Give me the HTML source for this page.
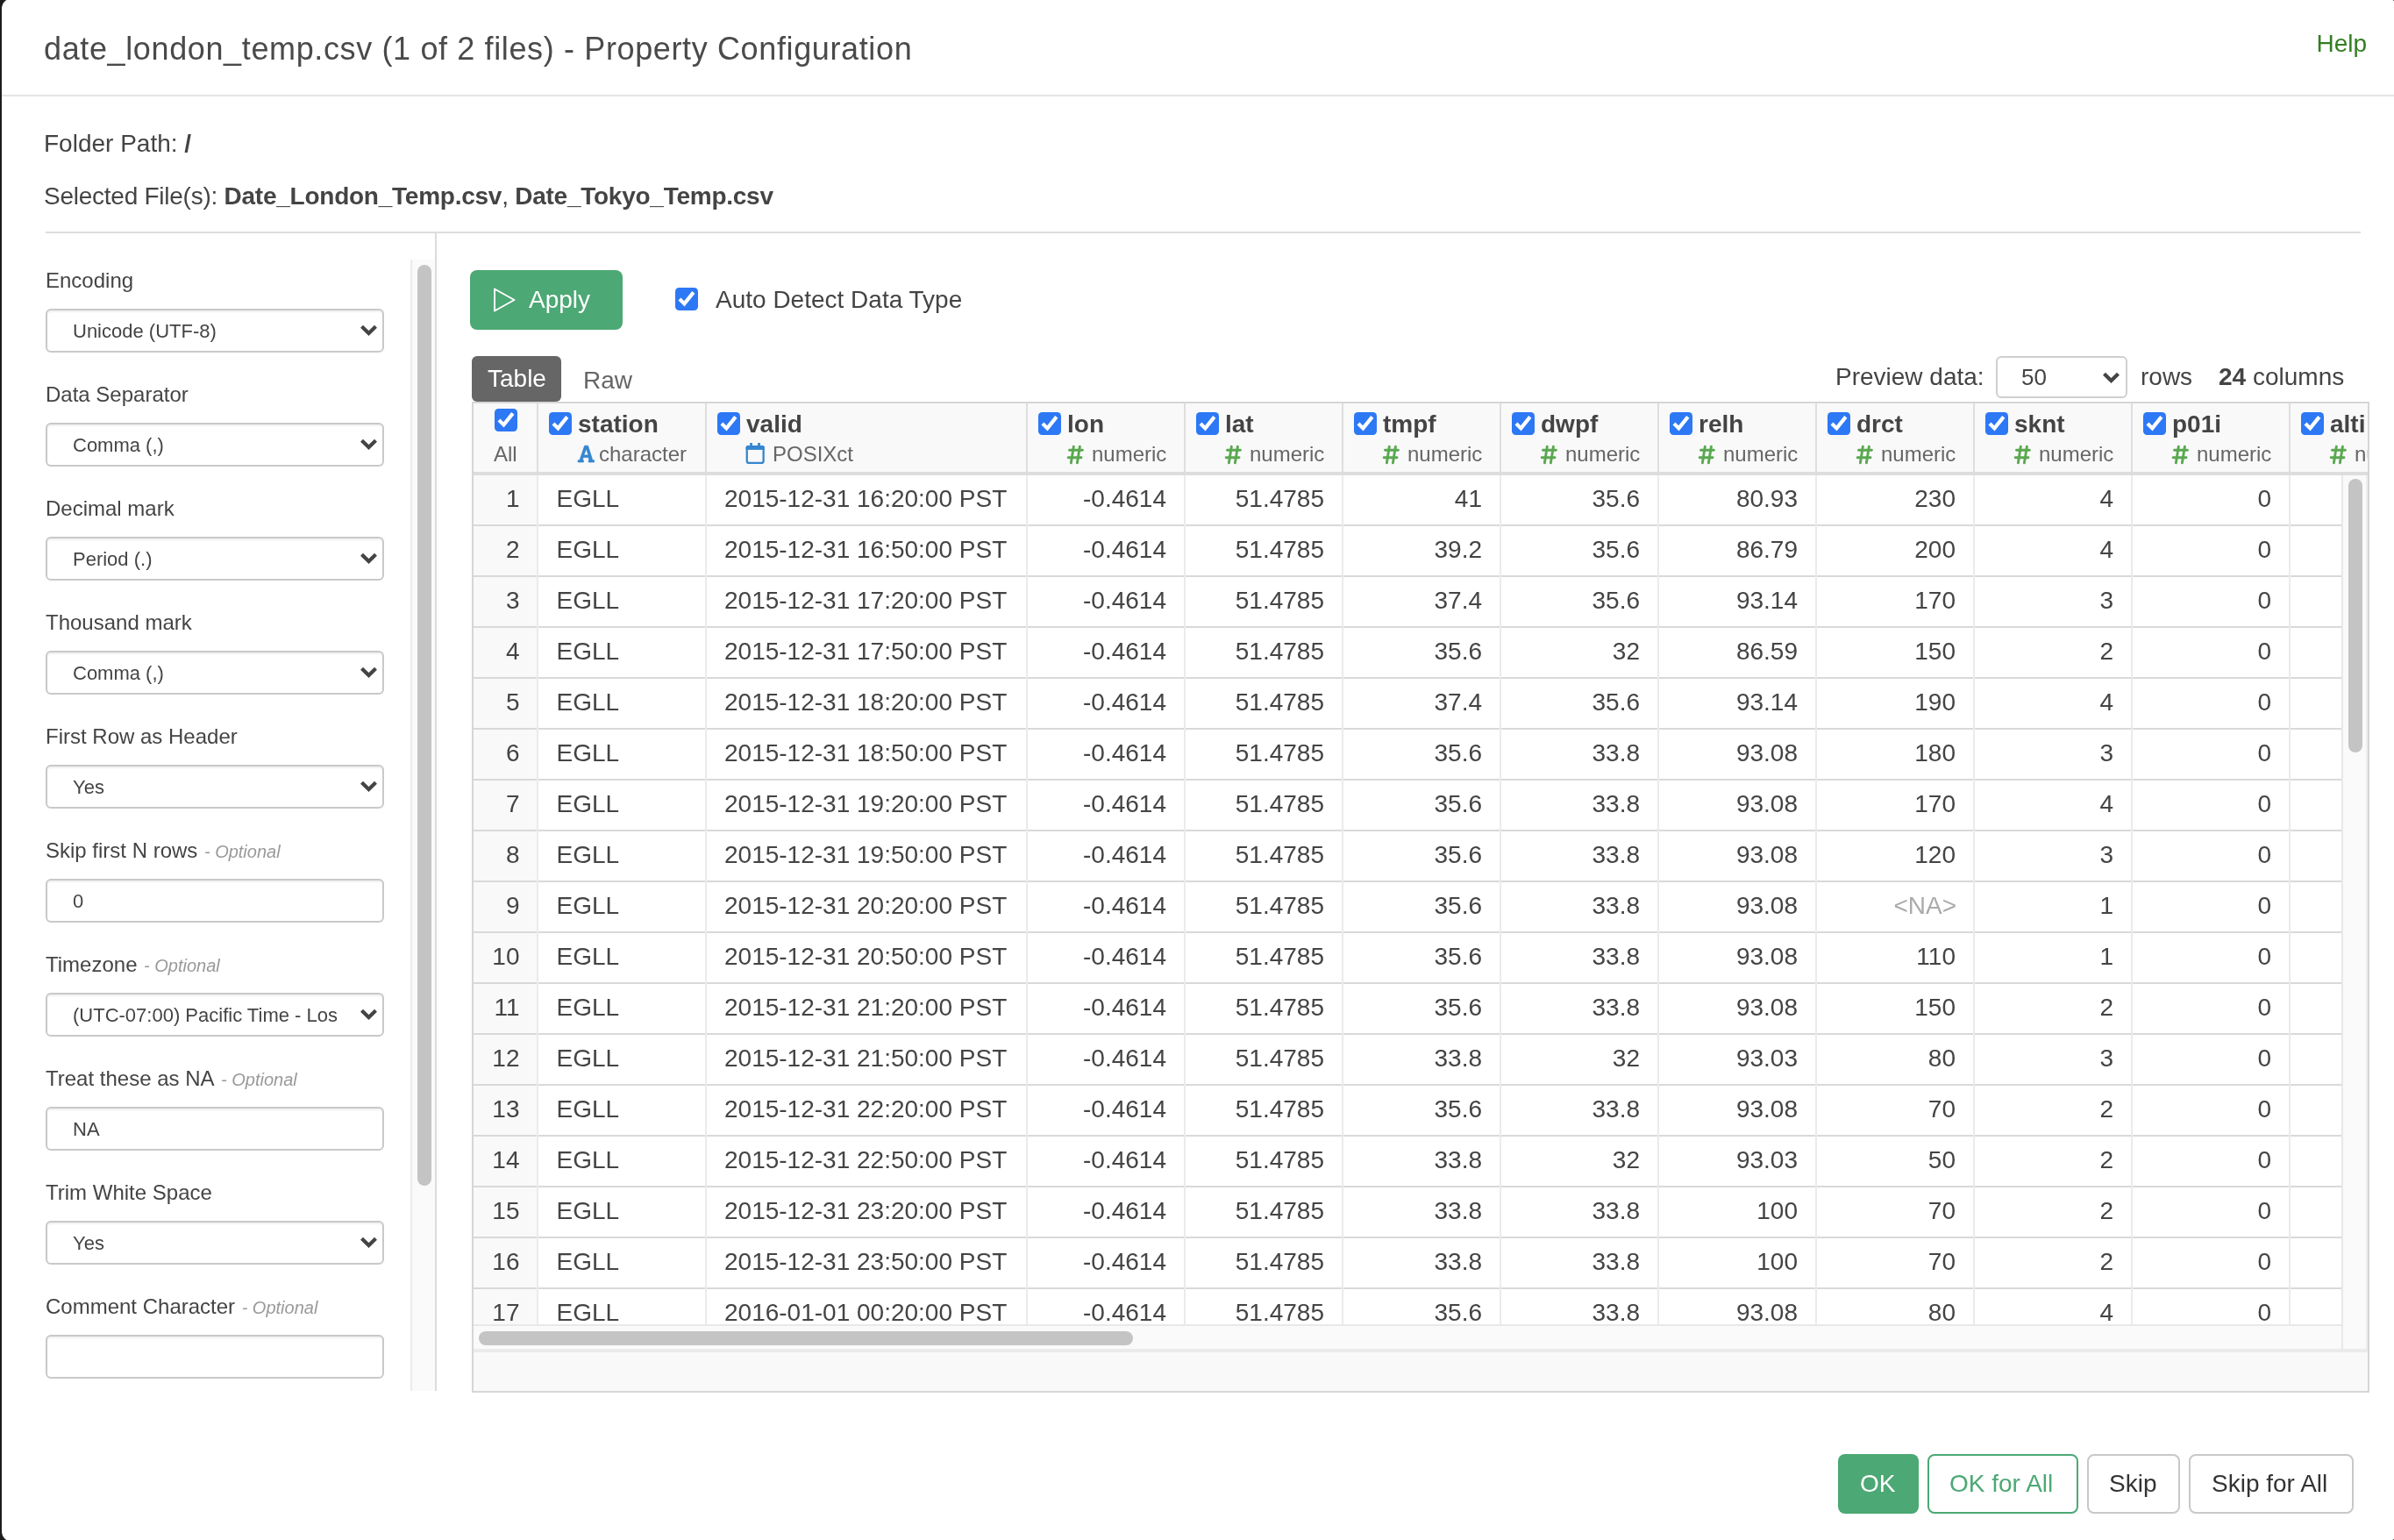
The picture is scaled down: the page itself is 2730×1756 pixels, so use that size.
<!DOCTYPE html>
<html><head><meta charset="utf-8"><title>Property Configuration</title>
<style>
html,body{margin:0;padding:0;width:2730px;height:1756px;overflow:hidden;background:#1c1e1e;}
.modal{position:absolute;left:2px;top:-2px;width:2732px;height:1760px;background:#fff;border-radius:12px;overflow:hidden;}
.stage{position:absolute;left:-2px;top:2px;width:2730px;height:1756px;will-change:transform;}
.t{position:absolute;white-space:pre;line-height:1;font-family:"Liberation Sans",sans-serif;}
.r{position:absolute;}
.r svg{display:block}
.clip{position:absolute;overflow:hidden;}
.box{position:absolute;left:52px;width:386px;height:50px;box-sizing:border-box;border:2px solid #c9c9c9;border-radius:6px;background:#fff;box-shadow:inset 0 2px 2px rgba(0,0,0,0.06);}
</style></head>
<body><div class="modal"><div class="stage">
<div class="t" style="left:50px;top:37.5px;font-size:36px;color:#4a4a4a;font-weight:400;letter-spacing:0.63px">date_london_temp.csv (1 of 2 files) - Property Configuration</div>
<div class="t" style="left:2641.5px;top:36.1px;font-size:28px;color:#347d22;font-weight:400;">Help</div>
<div class="r" style="left:2px;top:108px;width:2730px;height:2px;background:#e5e5e5;"></div>
<div class="t" style="left:50px;top:150.3px;font-size:28px;color:#444;font-weight:400;">Folder Path: <b>/</b></div>
<div class="t" style="left:50px;top:210.3px;font-size:28px;color:#444;font-weight:400;letter-spacing:-0.25px">Selected File(s): <b>Date_London_Temp.csv</b>, <b>Date_Tokyo_Temp.csv</b></div>
<div class="r" style="left:52px;top:264px;width:2640px;height:2px;background:#dcdcdc;"></div>
<div class="r" style="left:496px;top:266px;width:2px;height:1320px;background:#dcdcdc;"></div>
<div class="r" style="left:468px;top:296px;width:28px;height:1290px;background:#fafafa;border-left:2px solid #ebebeb;box-sizing:border-box"></div>
<div class="r" style="left:476px;top:302px;width:16px;height:1050px;background:#c4c4c4;border-radius:8px"></div>
<div class="t" style="left:52px;top:307.7px;font-size:24px;color:#444;font-weight:400;">Encoding</div>
<div class="box" style="top:352px"></div>
<div class="t" style="left:83px;top:367.4px;font-size:22px;color:#444;font-weight:400;">Unicode (UTF-8)</div>
<div class="r" style="left:409.5px;top:370px;width:22px;height:14px"><svg width="22" height="14" viewBox="0 0 22 14"><polyline points="2.5,2.2 10.5,10 18.5,2.2" fill="none" stroke="#444" stroke-width="4.2"/></svg></div>
<div class="t" style="left:52px;top:437.7px;font-size:24px;color:#444;font-weight:400;">Data Separator</div>
<div class="box" style="top:482px"></div>
<div class="t" style="left:83px;top:497.4px;font-size:22px;color:#444;font-weight:400;">Comma (,)</div>
<div class="r" style="left:409.5px;top:500px;width:22px;height:14px"><svg width="22" height="14" viewBox="0 0 22 14"><polyline points="2.5,2.2 10.5,10 18.5,2.2" fill="none" stroke="#444" stroke-width="4.2"/></svg></div>
<div class="t" style="left:52px;top:567.7px;font-size:24px;color:#444;font-weight:400;">Decimal mark</div>
<div class="box" style="top:612px"></div>
<div class="t" style="left:83px;top:627.4px;font-size:22px;color:#444;font-weight:400;">Period (.)</div>
<div class="r" style="left:409.5px;top:630px;width:22px;height:14px"><svg width="22" height="14" viewBox="0 0 22 14"><polyline points="2.5,2.2 10.5,10 18.5,2.2" fill="none" stroke="#444" stroke-width="4.2"/></svg></div>
<div class="t" style="left:52px;top:697.7px;font-size:24px;color:#444;font-weight:400;">Thousand mark</div>
<div class="box" style="top:742px"></div>
<div class="t" style="left:83px;top:757.4px;font-size:22px;color:#444;font-weight:400;">Comma (,)</div>
<div class="r" style="left:409.5px;top:760px;width:22px;height:14px"><svg width="22" height="14" viewBox="0 0 22 14"><polyline points="2.5,2.2 10.5,10 18.5,2.2" fill="none" stroke="#444" stroke-width="4.2"/></svg></div>
<div class="t" style="left:52px;top:827.7px;font-size:24px;color:#444;font-weight:400;">First Row as Header</div>
<div class="box" style="top:872px"></div>
<div class="t" style="left:83px;top:887.4px;font-size:22px;color:#444;font-weight:400;">Yes</div>
<div class="r" style="left:409.5px;top:890px;width:22px;height:14px"><svg width="22" height="14" viewBox="0 0 22 14"><polyline points="2.5,2.2 10.5,10 18.5,2.2" fill="none" stroke="#444" stroke-width="4.2"/></svg></div>
<div class="t" style="left:52px;top:957.7px;font-size:24px;color:#444;font-weight:400;">Skip first N rows<span style="color:#999;font-style:italic;font-size:20px;padding-left:2px"> - Optional</span></div>
<div class="box" style="top:1002px"></div>
<div class="t" style="left:83px;top:1017.4px;font-size:22px;color:#444;font-weight:400;">0</div>
<div class="t" style="left:52px;top:1087.7px;font-size:24px;color:#444;font-weight:400;">Timezone<span style="color:#999;font-style:italic;font-size:20px;padding-left:2px"> - Optional</span></div>
<div class="box" style="top:1132px"></div>
<div class="t" style="left:83px;top:1147.4px;font-size:22px;color:#444;font-weight:400;">(UTC-07:00) Pacific Time - Los</div>
<div class="r" style="left:409.5px;top:1150px;width:22px;height:14px"><svg width="22" height="14" viewBox="0 0 22 14"><polyline points="2.5,2.2 10.5,10 18.5,2.2" fill="none" stroke="#444" stroke-width="4.2"/></svg></div>
<div class="t" style="left:52px;top:1217.7px;font-size:24px;color:#444;font-weight:400;">Treat these as NA<span style="color:#999;font-style:italic;font-size:20px;padding-left:2px"> - Optional</span></div>
<div class="box" style="top:1262px"></div>
<div class="t" style="left:83px;top:1277.4px;font-size:22px;color:#444;font-weight:400;">NA</div>
<div class="t" style="left:52px;top:1347.7px;font-size:24px;color:#444;font-weight:400;">Trim White Space</div>
<div class="box" style="top:1392px"></div>
<div class="t" style="left:83px;top:1407.4px;font-size:22px;color:#444;font-weight:400;">Yes</div>
<div class="r" style="left:409.5px;top:1410px;width:22px;height:14px"><svg width="22" height="14" viewBox="0 0 22 14"><polyline points="2.5,2.2 10.5,10 18.5,2.2" fill="none" stroke="#444" stroke-width="4.2"/></svg></div>
<div class="t" style="left:52px;top:1477.7px;font-size:24px;color:#444;font-weight:400;">Comment Character<span style="color:#999;font-style:italic;font-size:20px;padding-left:2px"> - Optional</span></div>
<div class="box" style="top:1522px"></div>
<div class="r" style="left:536px;top:308px;width:174px;height:68px;background:#4ca874;border-radius:8px"></div>
<div class="r" style="left:560px;top:326px;width:30px;height:32px"><svg width="30" height="32" viewBox="0 0 30 32"><path d="M4,3.5 L26.5,16 L4,28.5 Z" fill="none" stroke="#fff" stroke-width="2" stroke-linejoin="round"/></svg></div>
<div class="t" style="left:603px;top:328.3px;font-size:28px;color:#fff;font-weight:400;">Apply</div>
<div class="r" style="left:770px;top:328px;width:26px;height:26px"><svg width="26" height="26" viewBox="0 0 26 26"><rect x="0" y="0" width="26" height="26" rx="4.5" fill="#2d78f5"/><polyline points="5,13 10.4,18.4 20.8,5.4" fill="none" stroke="#fff" stroke-width="4.2"/></svg></div>
<div class="t" style="left:816px;top:328.3px;font-size:28px;color:#444;font-weight:400;">Auto Detect Data Type</div>
<div class="r" style="left:538px;top:406px;width:102px;height:52px;background:#666;border-radius:6px"></div>
<div class="t" style="left:556px;top:418.3px;font-size:28px;color:#fff;font-weight:400;">Table</div>
<div class="t" style="left:665px;top:420.3px;font-size:28px;color:#666;font-weight:400;">Raw</div>
<div class="t" style="left:2093px;top:416.3px;font-size:28px;color:#444;font-weight:400;">Preview data:</div>
<div class="r" style="left:2276px;top:406px;width:150px;height:48px;background:#fff;border:2px solid #cfcfcf;border-radius:6px;box-sizing:border-box"></div>
<div class="t" style="left:2305px;top:417.0px;font-size:26px;color:#444;font-weight:400;">50</div>
<div class="r" style="left:2397px;top:424px;width:22px;height:14px"><svg width="22" height="14" viewBox="0 0 22 14"><polyline points="2.5,2.2 10.5,10 18.5,2.2" fill="none" stroke="#444" stroke-width="4.2"/></svg></div>
<div class="t" style="left:2441px;top:416.3px;font-size:28px;color:#444;font-weight:400;">rows</div>
<div class="t" style="left:2530px;top:416.3px;font-size:28px;color:#444;font-weight:400;"><b>24</b> columns</div>
<div class="r" style="left:538px;top:458px;width:2164px;height:1130px;background:#f9f9f9;border:2px solid #d6d6d6;box-sizing:border-box"></div>
<div class="r" style="left:540px;top:460px;width:2160px;height:78px;background:#f9f9f9;"></div>
<div class="r" style="left:540px;top:538px;width:2160px;height:4px;background:#dddddd;"></div>
<div class="r" style="left:614px;top:542px;width:2056px;height:968px;background:#ffffff;"></div>
<div class="r" style="left:540px;top:542px;width:72px;height:968px;background:#f9f9f9;"></div>
<div class="r" style="left:540px;top:598px;width:2130px;height:2px;background:#d9d9d9;"></div>
<div class="r" style="left:540px;top:656px;width:2130px;height:2px;background:#d9d9d9;"></div>
<div class="r" style="left:540px;top:714px;width:2130px;height:2px;background:#d9d9d9;"></div>
<div class="r" style="left:540px;top:772px;width:2130px;height:2px;background:#d9d9d9;"></div>
<div class="r" style="left:540px;top:830px;width:2130px;height:2px;background:#d9d9d9;"></div>
<div class="r" style="left:540px;top:888px;width:2130px;height:2px;background:#d9d9d9;"></div>
<div class="r" style="left:540px;top:946px;width:2130px;height:2px;background:#d9d9d9;"></div>
<div class="r" style="left:540px;top:1004px;width:2130px;height:2px;background:#d9d9d9;"></div>
<div class="r" style="left:540px;top:1062px;width:2130px;height:2px;background:#d9d9d9;"></div>
<div class="r" style="left:540px;top:1120px;width:2130px;height:2px;background:#d9d9d9;"></div>
<div class="r" style="left:540px;top:1178px;width:2130px;height:2px;background:#d9d9d9;"></div>
<div class="r" style="left:540px;top:1236px;width:2130px;height:2px;background:#d9d9d9;"></div>
<div class="r" style="left:540px;top:1294px;width:2130px;height:2px;background:#d9d9d9;"></div>
<div class="r" style="left:540px;top:1352px;width:2130px;height:2px;background:#d9d9d9;"></div>
<div class="r" style="left:540px;top:1410px;width:2130px;height:2px;background:#d9d9d9;"></div>
<div class="r" style="left:540px;top:1468px;width:2130px;height:2px;background:#d9d9d9;"></div>
<div class="r" style="left:612px;top:460px;width:2px;height:78px;background:#dedede;"></div>
<div class="r" style="left:612px;top:542px;width:2px;height:968px;background:#ebebeb;"></div>
<div class="r" style="left:804px;top:460px;width:2px;height:78px;background:#dedede;"></div>
<div class="r" style="left:804px;top:542px;width:2px;height:968px;background:#ebebeb;"></div>
<div class="r" style="left:1170px;top:460px;width:2px;height:78px;background:#dedede;"></div>
<div class="r" style="left:1170px;top:542px;width:2px;height:968px;background:#ebebeb;"></div>
<div class="r" style="left:1350px;top:460px;width:2px;height:78px;background:#dedede;"></div>
<div class="r" style="left:1350px;top:542px;width:2px;height:968px;background:#ebebeb;"></div>
<div class="r" style="left:1530px;top:460px;width:2px;height:78px;background:#dedede;"></div>
<div class="r" style="left:1530px;top:542px;width:2px;height:968px;background:#ebebeb;"></div>
<div class="r" style="left:1710px;top:460px;width:2px;height:78px;background:#dedede;"></div>
<div class="r" style="left:1710px;top:542px;width:2px;height:968px;background:#ebebeb;"></div>
<div class="r" style="left:1890px;top:460px;width:2px;height:78px;background:#dedede;"></div>
<div class="r" style="left:1890px;top:542px;width:2px;height:968px;background:#ebebeb;"></div>
<div class="r" style="left:2070px;top:460px;width:2px;height:78px;background:#dedede;"></div>
<div class="r" style="left:2070px;top:542px;width:2px;height:968px;background:#ebebeb;"></div>
<div class="r" style="left:2250px;top:460px;width:2px;height:78px;background:#dedede;"></div>
<div class="r" style="left:2250px;top:542px;width:2px;height:968px;background:#ebebeb;"></div>
<div class="r" style="left:2430px;top:460px;width:2px;height:78px;background:#dedede;"></div>
<div class="r" style="left:2430px;top:542px;width:2px;height:968px;background:#ebebeb;"></div>
<div class="r" style="left:2610px;top:460px;width:2px;height:78px;background:#dedede;"></div>
<div class="r" style="left:2610px;top:542px;width:2px;height:968px;background:#ebebeb;"></div>
<div class="r" style="left:564px;top:466px;width:26px;height:26px"><svg width="26" height="26" viewBox="0 0 26 26"><rect x="0" y="0" width="26" height="26" rx="4.5" fill="#2d78f5"/><polyline points="5,13 10.4,18.4 20.8,5.4" fill="none" stroke="#fff" stroke-width="4.2"/></svg></div>
<div class="t" style="left:563px;top:505.7px;font-size:24px;color:#666;font-weight:400;">All</div>
<div class="clip" style="left:540px;top:460px;width:2160px;height:78px"><div style="position:absolute;left:-540px;top:-460px"><div class="r" style="left:626px;top:470px;width:26px;height:26px"><svg width="26" height="26" viewBox="0 0 26 26"><rect x="0" y="0" width="26" height="26" rx="4.5" fill="#2d78f5"/><polyline points="5,13 10.4,18.4 20.8,5.4" fill="none" stroke="#fff" stroke-width="4.2"/></svg></div><div class="t" style="left:659px;top:470.3px;font-size:28px;color:#444;font-weight:700;">station</div><div class="r" style="left:650px;top:502px;width:40px;height:30px"><svg width="40" height="30" viewBox="0 0 40 30"><path d="M16.6,6.2 L20.5,6.2 L25.8,22.7 L27.6,22.7 L27.6,25 L21.2,25 L21.2,22.7 L22,22.7 L21,19.6 L15.2,19.6 L14.2,22.7 L15.4,22.7 L15.4,25 L9.1,25 L9.1,22.7 L11,22.7 Z M18.45,9.9 L21,16.9 L15.9,16.9 Z" fill="#3586cf" fill-rule="evenodd" stroke="#3586cf" stroke-width="0.7" stroke-linejoin="round"/></svg></div><div class="t" style="left:683px;top:505.7px;font-size:24px;color:#666;font-weight:400;">character</div><div class="r" style="left:818px;top:470px;width:26px;height:26px"><svg width="26" height="26" viewBox="0 0 26 26"><rect x="0" y="0" width="26" height="26" rx="4.5" fill="#2d78f5"/><polyline points="5,13 10.4,18.4 20.8,5.4" fill="none" stroke="#fff" stroke-width="4.2"/></svg></div><div class="t" style="left:851px;top:470.3px;font-size:28px;color:#444;font-weight:700;">valid</div><div class="r" style="left:850px;top:505px;width:23px;height:25px"><svg width="23" height="25" viewBox="0 0 23 25"><rect x="1.75" y="4.05" width="18.9" height="18.9" rx="2.5" fill="none" stroke="#3586cf" stroke-width="2.3"/><rect x="0.6" y="2.9" width="21.2" height="4.8" rx="2" fill="#3586cf"/><rect x="0.6" y="5" width="21.2" height="2.7" fill="#3586cf"/><rect x="5.2" y="0" width="2.7" height="4" fill="#3586cf"/><rect x="14.1" y="0" width="2.8" height="4" fill="#3586cf"/></svg></div><div class="t" style="left:881px;top:505.7px;font-size:24px;color:#666;font-weight:400;">POSIXct</div><div class="r" style="left:1184px;top:470px;width:26px;height:26px"><svg width="26" height="26" viewBox="0 0 26 26"><rect x="0" y="0" width="26" height="26" rx="4.5" fill="#2d78f5"/><polyline points="5,13 10.4,18.4 20.8,5.4" fill="none" stroke="#fff" stroke-width="4.2"/></svg></div><div class="t" style="left:1217px;top:470.3px;font-size:28px;color:#444;font-weight:700;">lon</div><div class="r" style="left:1210px;top:502px;width:40px;height:30px"><svg width="40" height="30" viewBox="0 0 40 30" stroke="#5aa850" stroke-width="2.9" stroke-linecap="round" fill="none"><line x1="14.3" y1="7.3" x2="11.4" y2="25.8"/><line x1="21.4" y1="7.3" x2="18.4" y2="25.8"/><line x1="9.6" y1="11.3" x2="24.3" y2="11.3"/><line x1="8.2" y1="19.7" x2="23" y2="19.7"/></svg></div><div class="t" style="left:1245px;top:505.7px;font-size:24px;color:#666;font-weight:400;">numeric</div><div class="r" style="left:1364px;top:470px;width:26px;height:26px"><svg width="26" height="26" viewBox="0 0 26 26"><rect x="0" y="0" width="26" height="26" rx="4.5" fill="#2d78f5"/><polyline points="5,13 10.4,18.4 20.8,5.4" fill="none" stroke="#fff" stroke-width="4.2"/></svg></div><div class="t" style="left:1397px;top:470.3px;font-size:28px;color:#444;font-weight:700;">lat</div><div class="r" style="left:1390px;top:502px;width:40px;height:30px"><svg width="40" height="30" viewBox="0 0 40 30" stroke="#5aa850" stroke-width="2.9" stroke-linecap="round" fill="none"><line x1="14.3" y1="7.3" x2="11.4" y2="25.8"/><line x1="21.4" y1="7.3" x2="18.4" y2="25.8"/><line x1="9.6" y1="11.3" x2="24.3" y2="11.3"/><line x1="8.2" y1="19.7" x2="23" y2="19.7"/></svg></div><div class="t" style="left:1425px;top:505.7px;font-size:24px;color:#666;font-weight:400;">numeric</div><div class="r" style="left:1544px;top:470px;width:26px;height:26px"><svg width="26" height="26" viewBox="0 0 26 26"><rect x="0" y="0" width="26" height="26" rx="4.5" fill="#2d78f5"/><polyline points="5,13 10.4,18.4 20.8,5.4" fill="none" stroke="#fff" stroke-width="4.2"/></svg></div><div class="t" style="left:1577px;top:470.3px;font-size:28px;color:#444;font-weight:700;">tmpf</div><div class="r" style="left:1570px;top:502px;width:40px;height:30px"><svg width="40" height="30" viewBox="0 0 40 30" stroke="#5aa850" stroke-width="2.9" stroke-linecap="round" fill="none"><line x1="14.3" y1="7.3" x2="11.4" y2="25.8"/><line x1="21.4" y1="7.3" x2="18.4" y2="25.8"/><line x1="9.6" y1="11.3" x2="24.3" y2="11.3"/><line x1="8.2" y1="19.7" x2="23" y2="19.7"/></svg></div><div class="t" style="left:1605px;top:505.7px;font-size:24px;color:#666;font-weight:400;">numeric</div><div class="r" style="left:1724px;top:470px;width:26px;height:26px"><svg width="26" height="26" viewBox="0 0 26 26"><rect x="0" y="0" width="26" height="26" rx="4.5" fill="#2d78f5"/><polyline points="5,13 10.4,18.4 20.8,5.4" fill="none" stroke="#fff" stroke-width="4.2"/></svg></div><div class="t" style="left:1757px;top:470.3px;font-size:28px;color:#444;font-weight:700;">dwpf</div><div class="r" style="left:1750px;top:502px;width:40px;height:30px"><svg width="40" height="30" viewBox="0 0 40 30" stroke="#5aa850" stroke-width="2.9" stroke-linecap="round" fill="none"><line x1="14.3" y1="7.3" x2="11.4" y2="25.8"/><line x1="21.4" y1="7.3" x2="18.4" y2="25.8"/><line x1="9.6" y1="11.3" x2="24.3" y2="11.3"/><line x1="8.2" y1="19.7" x2="23" y2="19.7"/></svg></div><div class="t" style="left:1785px;top:505.7px;font-size:24px;color:#666;font-weight:400;">numeric</div><div class="r" style="left:1904px;top:470px;width:26px;height:26px"><svg width="26" height="26" viewBox="0 0 26 26"><rect x="0" y="0" width="26" height="26" rx="4.5" fill="#2d78f5"/><polyline points="5,13 10.4,18.4 20.8,5.4" fill="none" stroke="#fff" stroke-width="4.2"/></svg></div><div class="t" style="left:1937px;top:470.3px;font-size:28px;color:#444;font-weight:700;">relh</div><div class="r" style="left:1930px;top:502px;width:40px;height:30px"><svg width="40" height="30" viewBox="0 0 40 30" stroke="#5aa850" stroke-width="2.9" stroke-linecap="round" fill="none"><line x1="14.3" y1="7.3" x2="11.4" y2="25.8"/><line x1="21.4" y1="7.3" x2="18.4" y2="25.8"/><line x1="9.6" y1="11.3" x2="24.3" y2="11.3"/><line x1="8.2" y1="19.7" x2="23" y2="19.7"/></svg></div><div class="t" style="left:1965px;top:505.7px;font-size:24px;color:#666;font-weight:400;">numeric</div><div class="r" style="left:2084px;top:470px;width:26px;height:26px"><svg width="26" height="26" viewBox="0 0 26 26"><rect x="0" y="0" width="26" height="26" rx="4.5" fill="#2d78f5"/><polyline points="5,13 10.4,18.4 20.8,5.4" fill="none" stroke="#fff" stroke-width="4.2"/></svg></div><div class="t" style="left:2117px;top:470.3px;font-size:28px;color:#444;font-weight:700;">drct</div><div class="r" style="left:2110px;top:502px;width:40px;height:30px"><svg width="40" height="30" viewBox="0 0 40 30" stroke="#5aa850" stroke-width="2.9" stroke-linecap="round" fill="none"><line x1="14.3" y1="7.3" x2="11.4" y2="25.8"/><line x1="21.4" y1="7.3" x2="18.4" y2="25.8"/><line x1="9.6" y1="11.3" x2="24.3" y2="11.3"/><line x1="8.2" y1="19.7" x2="23" y2="19.7"/></svg></div><div class="t" style="left:2145px;top:505.7px;font-size:24px;color:#666;font-weight:400;">numeric</div><div class="r" style="left:2264px;top:470px;width:26px;height:26px"><svg width="26" height="26" viewBox="0 0 26 26"><rect x="0" y="0" width="26" height="26" rx="4.5" fill="#2d78f5"/><polyline points="5,13 10.4,18.4 20.8,5.4" fill="none" stroke="#fff" stroke-width="4.2"/></svg></div><div class="t" style="left:2297px;top:470.3px;font-size:28px;color:#444;font-weight:700;">sknt</div><div class="r" style="left:2290px;top:502px;width:40px;height:30px"><svg width="40" height="30" viewBox="0 0 40 30" stroke="#5aa850" stroke-width="2.9" stroke-linecap="round" fill="none"><line x1="14.3" y1="7.3" x2="11.4" y2="25.8"/><line x1="21.4" y1="7.3" x2="18.4" y2="25.8"/><line x1="9.6" y1="11.3" x2="24.3" y2="11.3"/><line x1="8.2" y1="19.7" x2="23" y2="19.7"/></svg></div><div class="t" style="left:2325px;top:505.7px;font-size:24px;color:#666;font-weight:400;">numeric</div><div class="r" style="left:2444px;top:470px;width:26px;height:26px"><svg width="26" height="26" viewBox="0 0 26 26"><rect x="0" y="0" width="26" height="26" rx="4.5" fill="#2d78f5"/><polyline points="5,13 10.4,18.4 20.8,5.4" fill="none" stroke="#fff" stroke-width="4.2"/></svg></div><div class="t" style="left:2477px;top:470.3px;font-size:28px;color:#444;font-weight:700;">p01i</div><div class="r" style="left:2470px;top:502px;width:40px;height:30px"><svg width="40" height="30" viewBox="0 0 40 30" stroke="#5aa850" stroke-width="2.9" stroke-linecap="round" fill="none"><line x1="14.3" y1="7.3" x2="11.4" y2="25.8"/><line x1="21.4" y1="7.3" x2="18.4" y2="25.8"/><line x1="9.6" y1="11.3" x2="24.3" y2="11.3"/><line x1="8.2" y1="19.7" x2="23" y2="19.7"/></svg></div><div class="t" style="left:2505px;top:505.7px;font-size:24px;color:#666;font-weight:400;">numeric</div><div class="r" style="left:2624px;top:470px;width:26px;height:26px"><svg width="26" height="26" viewBox="0 0 26 26"><rect x="0" y="0" width="26" height="26" rx="4.5" fill="#2d78f5"/><polyline points="5,13 10.4,18.4 20.8,5.4" fill="none" stroke="#fff" stroke-width="4.2"/></svg></div><div class="t" style="left:2657px;top:470.3px;font-size:28px;color:#444;font-weight:700;">alti</div><div class="r" style="left:2650px;top:502px;width:40px;height:30px"><svg width="40" height="30" viewBox="0 0 40 30" stroke="#5aa850" stroke-width="2.9" stroke-linecap="round" fill="none"><line x1="14.3" y1="7.3" x2="11.4" y2="25.8"/><line x1="21.4" y1="7.3" x2="18.4" y2="25.8"/><line x1="9.6" y1="11.3" x2="24.3" y2="11.3"/><line x1="8.2" y1="19.7" x2="23" y2="19.7"/></svg></div><div class="t" style="left:2685px;top:505.7px;font-size:24px;color:#666;font-weight:400;">numeric</div></div></div>
<div class="clip" style="left:540px;top:542px;width:2130px;height:968px"><div style="position:absolute;left:-540px;top:-542px;width:2730px;height:1756px"><div class="t" style="right:2137.5px;top:555.0px;font-size:28px;color:#444;font-weight:400;text-align:right;">1</div><div class="t" style="left:634.5px;top:555.0px;font-size:28px;color:#444;font-weight:400;">EGLL</div><div class="t" style="left:826px;top:555.0px;font-size:28px;color:#444;font-weight:400;">2015-12-31 16:20:00 PST</div><div class="t" style="right:1400px;top:555.0px;font-size:28px;color:#444;font-weight:400;text-align:right;">-0.4614</div><div class="t" style="right:1220px;top:555.0px;font-size:28px;color:#444;font-weight:400;text-align:right;">51.4785</div><div class="t" style="right:1040px;top:555.0px;font-size:28px;color:#444;font-weight:400;text-align:right;">41</div><div class="t" style="right:860px;top:555.0px;font-size:28px;color:#444;font-weight:400;text-align:right;">35.6</div><div class="t" style="right:680px;top:555.0px;font-size:28px;color:#444;font-weight:400;text-align:right;">80.93</div><div class="t" style="right:500px;top:555.0px;font-size:28px;color:#444;font-weight:400;text-align:right;">230</div><div class="t" style="right:320px;top:555.0px;font-size:28px;color:#444;font-weight:400;text-align:right;">4</div><div class="t" style="right:140px;top:555.0px;font-size:28px;color:#444;font-weight:400;text-align:right;">0</div><div class="t" style="right:2137.5px;top:613.0px;font-size:28px;color:#444;font-weight:400;text-align:right;">2</div><div class="t" style="left:634.5px;top:613.0px;font-size:28px;color:#444;font-weight:400;">EGLL</div><div class="t" style="left:826px;top:613.0px;font-size:28px;color:#444;font-weight:400;">2015-12-31 16:50:00 PST</div><div class="t" style="right:1400px;top:613.0px;font-size:28px;color:#444;font-weight:400;text-align:right;">-0.4614</div><div class="t" style="right:1220px;top:613.0px;font-size:28px;color:#444;font-weight:400;text-align:right;">51.4785</div><div class="t" style="right:1040px;top:613.0px;font-size:28px;color:#444;font-weight:400;text-align:right;">39.2</div><div class="t" style="right:860px;top:613.0px;font-size:28px;color:#444;font-weight:400;text-align:right;">35.6</div><div class="t" style="right:680px;top:613.0px;font-size:28px;color:#444;font-weight:400;text-align:right;">86.79</div><div class="t" style="right:500px;top:613.0px;font-size:28px;color:#444;font-weight:400;text-align:right;">200</div><div class="t" style="right:320px;top:613.0px;font-size:28px;color:#444;font-weight:400;text-align:right;">4</div><div class="t" style="right:140px;top:613.0px;font-size:28px;color:#444;font-weight:400;text-align:right;">0</div><div class="t" style="right:2137.5px;top:671.0px;font-size:28px;color:#444;font-weight:400;text-align:right;">3</div><div class="t" style="left:634.5px;top:671.0px;font-size:28px;color:#444;font-weight:400;">EGLL</div><div class="t" style="left:826px;top:671.0px;font-size:28px;color:#444;font-weight:400;">2015-12-31 17:20:00 PST</div><div class="t" style="right:1400px;top:671.0px;font-size:28px;color:#444;font-weight:400;text-align:right;">-0.4614</div><div class="t" style="right:1220px;top:671.0px;font-size:28px;color:#444;font-weight:400;text-align:right;">51.4785</div><div class="t" style="right:1040px;top:671.0px;font-size:28px;color:#444;font-weight:400;text-align:right;">37.4</div><div class="t" style="right:860px;top:671.0px;font-size:28px;color:#444;font-weight:400;text-align:right;">35.6</div><div class="t" style="right:680px;top:671.0px;font-size:28px;color:#444;font-weight:400;text-align:right;">93.14</div><div class="t" style="right:500px;top:671.0px;font-size:28px;color:#444;font-weight:400;text-align:right;">170</div><div class="t" style="right:320px;top:671.0px;font-size:28px;color:#444;font-weight:400;text-align:right;">3</div><div class="t" style="right:140px;top:671.0px;font-size:28px;color:#444;font-weight:400;text-align:right;">0</div><div class="t" style="right:2137.5px;top:729.0px;font-size:28px;color:#444;font-weight:400;text-align:right;">4</div><div class="t" style="left:634.5px;top:729.0px;font-size:28px;color:#444;font-weight:400;">EGLL</div><div class="t" style="left:826px;top:729.0px;font-size:28px;color:#444;font-weight:400;">2015-12-31 17:50:00 PST</div><div class="t" style="right:1400px;top:729.0px;font-size:28px;color:#444;font-weight:400;text-align:right;">-0.4614</div><div class="t" style="right:1220px;top:729.0px;font-size:28px;color:#444;font-weight:400;text-align:right;">51.4785</div><div class="t" style="right:1040px;top:729.0px;font-size:28px;color:#444;font-weight:400;text-align:right;">35.6</div><div class="t" style="right:860px;top:729.0px;font-size:28px;color:#444;font-weight:400;text-align:right;">32</div><div class="t" style="right:680px;top:729.0px;font-size:28px;color:#444;font-weight:400;text-align:right;">86.59</div><div class="t" style="right:500px;top:729.0px;font-size:28px;color:#444;font-weight:400;text-align:right;">150</div><div class="t" style="right:320px;top:729.0px;font-size:28px;color:#444;font-weight:400;text-align:right;">2</div><div class="t" style="right:140px;top:729.0px;font-size:28px;color:#444;font-weight:400;text-align:right;">0</div><div class="t" style="right:2137.5px;top:787.0px;font-size:28px;color:#444;font-weight:400;text-align:right;">5</div><div class="t" style="left:634.5px;top:787.0px;font-size:28px;color:#444;font-weight:400;">EGLL</div><div class="t" style="left:826px;top:787.0px;font-size:28px;color:#444;font-weight:400;">2015-12-31 18:20:00 PST</div><div class="t" style="right:1400px;top:787.0px;font-size:28px;color:#444;font-weight:400;text-align:right;">-0.4614</div><div class="t" style="right:1220px;top:787.0px;font-size:28px;color:#444;font-weight:400;text-align:right;">51.4785</div><div class="t" style="right:1040px;top:787.0px;font-size:28px;color:#444;font-weight:400;text-align:right;">37.4</div><div class="t" style="right:860px;top:787.0px;font-size:28px;color:#444;font-weight:400;text-align:right;">35.6</div><div class="t" style="right:680px;top:787.0px;font-size:28px;color:#444;font-weight:400;text-align:right;">93.14</div><div class="t" style="right:500px;top:787.0px;font-size:28px;color:#444;font-weight:400;text-align:right;">190</div><div class="t" style="right:320px;top:787.0px;font-size:28px;color:#444;font-weight:400;text-align:right;">4</div><div class="t" style="right:140px;top:787.0px;font-size:28px;color:#444;font-weight:400;text-align:right;">0</div><div class="t" style="right:2137.5px;top:845.0px;font-size:28px;color:#444;font-weight:400;text-align:right;">6</div><div class="t" style="left:634.5px;top:845.0px;font-size:28px;color:#444;font-weight:400;">EGLL</div><div class="t" style="left:826px;top:845.0px;font-size:28px;color:#444;font-weight:400;">2015-12-31 18:50:00 PST</div><div class="t" style="right:1400px;top:845.0px;font-size:28px;color:#444;font-weight:400;text-align:right;">-0.4614</div><div class="t" style="right:1220px;top:845.0px;font-size:28px;color:#444;font-weight:400;text-align:right;">51.4785</div><div class="t" style="right:1040px;top:845.0px;font-size:28px;color:#444;font-weight:400;text-align:right;">35.6</div><div class="t" style="right:860px;top:845.0px;font-size:28px;color:#444;font-weight:400;text-align:right;">33.8</div><div class="t" style="right:680px;top:845.0px;font-size:28px;color:#444;font-weight:400;text-align:right;">93.08</div><div class="t" style="right:500px;top:845.0px;font-size:28px;color:#444;font-weight:400;text-align:right;">180</div><div class="t" style="right:320px;top:845.0px;font-size:28px;color:#444;font-weight:400;text-align:right;">3</div><div class="t" style="right:140px;top:845.0px;font-size:28px;color:#444;font-weight:400;text-align:right;">0</div><div class="t" style="right:2137.5px;top:903.0px;font-size:28px;color:#444;font-weight:400;text-align:right;">7</div><div class="t" style="left:634.5px;top:903.0px;font-size:28px;color:#444;font-weight:400;">EGLL</div><div class="t" style="left:826px;top:903.0px;font-size:28px;color:#444;font-weight:400;">2015-12-31 19:20:00 PST</div><div class="t" style="right:1400px;top:903.0px;font-size:28px;color:#444;font-weight:400;text-align:right;">-0.4614</div><div class="t" style="right:1220px;top:903.0px;font-size:28px;color:#444;font-weight:400;text-align:right;">51.4785</div><div class="t" style="right:1040px;top:903.0px;font-size:28px;color:#444;font-weight:400;text-align:right;">35.6</div><div class="t" style="right:860px;top:903.0px;font-size:28px;color:#444;font-weight:400;text-align:right;">33.8</div><div class="t" style="right:680px;top:903.0px;font-size:28px;color:#444;font-weight:400;text-align:right;">93.08</div><div class="t" style="right:500px;top:903.0px;font-size:28px;color:#444;font-weight:400;text-align:right;">170</div><div class="t" style="right:320px;top:903.0px;font-size:28px;color:#444;font-weight:400;text-align:right;">4</div><div class="t" style="right:140px;top:903.0px;font-size:28px;color:#444;font-weight:400;text-align:right;">0</div><div class="t" style="right:2137.5px;top:961.0px;font-size:28px;color:#444;font-weight:400;text-align:right;">8</div><div class="t" style="left:634.5px;top:961.0px;font-size:28px;color:#444;font-weight:400;">EGLL</div><div class="t" style="left:826px;top:961.0px;font-size:28px;color:#444;font-weight:400;">2015-12-31 19:50:00 PST</div><div class="t" style="right:1400px;top:961.0px;font-size:28px;color:#444;font-weight:400;text-align:right;">-0.4614</div><div class="t" style="right:1220px;top:961.0px;font-size:28px;color:#444;font-weight:400;text-align:right;">51.4785</div><div class="t" style="right:1040px;top:961.0px;font-size:28px;color:#444;font-weight:400;text-align:right;">35.6</div><div class="t" style="right:860px;top:961.0px;font-size:28px;color:#444;font-weight:400;text-align:right;">33.8</div><div class="t" style="right:680px;top:961.0px;font-size:28px;color:#444;font-weight:400;text-align:right;">93.08</div><div class="t" style="right:500px;top:961.0px;font-size:28px;color:#444;font-weight:400;text-align:right;">120</div><div class="t" style="right:320px;top:961.0px;font-size:28px;color:#444;font-weight:400;text-align:right;">3</div><div class="t" style="right:140px;top:961.0px;font-size:28px;color:#444;font-weight:400;text-align:right;">0</div><div class="t" style="right:2137.5px;top:1019.0px;font-size:28px;color:#444;font-weight:400;text-align:right;">9</div><div class="t" style="left:634.5px;top:1019.0px;font-size:28px;color:#444;font-weight:400;">EGLL</div><div class="t" style="left:826px;top:1019.0px;font-size:28px;color:#444;font-weight:400;">2015-12-31 20:20:00 PST</div><div class="t" style="right:1400px;top:1019.0px;font-size:28px;color:#444;font-weight:400;text-align:right;">-0.4614</div><div class="t" style="right:1220px;top:1019.0px;font-size:28px;color:#444;font-weight:400;text-align:right;">51.4785</div><div class="t" style="right:1040px;top:1019.0px;font-size:28px;color:#444;font-weight:400;text-align:right;">35.6</div><div class="t" style="right:860px;top:1019.0px;font-size:28px;color:#444;font-weight:400;text-align:right;">33.8</div><div class="t" style="right:680px;top:1019.0px;font-size:28px;color:#444;font-weight:400;text-align:right;">93.08</div><div class="t" style="right:499px;top:1019.0px;font-size:28px;color:#aaa;font-weight:400;text-align:right;">&lt;NA&gt;</div><div class="t" style="right:320px;top:1019.0px;font-size:28px;color:#444;font-weight:400;text-align:right;">1</div><div class="t" style="right:140px;top:1019.0px;font-size:28px;color:#444;font-weight:400;text-align:right;">0</div><div class="t" style="right:2137.5px;top:1077.0px;font-size:28px;color:#444;font-weight:400;text-align:right;">10</div><div class="t" style="left:634.5px;top:1077.0px;font-size:28px;color:#444;font-weight:400;">EGLL</div><div class="t" style="left:826px;top:1077.0px;font-size:28px;color:#444;font-weight:400;">2015-12-31 20:50:00 PST</div><div class="t" style="right:1400px;top:1077.0px;font-size:28px;color:#444;font-weight:400;text-align:right;">-0.4614</div><div class="t" style="right:1220px;top:1077.0px;font-size:28px;color:#444;font-weight:400;text-align:right;">51.4785</div><div class="t" style="right:1040px;top:1077.0px;font-size:28px;color:#444;font-weight:400;text-align:right;">35.6</div><div class="t" style="right:860px;top:1077.0px;font-size:28px;color:#444;font-weight:400;text-align:right;">33.8</div><div class="t" style="right:680px;top:1077.0px;font-size:28px;color:#444;font-weight:400;text-align:right;">93.08</div><div class="t" style="right:500px;top:1077.0px;font-size:28px;color:#444;font-weight:400;text-align:right;">110</div><div class="t" style="right:320px;top:1077.0px;font-size:28px;color:#444;font-weight:400;text-align:right;">1</div><div class="t" style="right:140px;top:1077.0px;font-size:28px;color:#444;font-weight:400;text-align:right;">0</div><div class="t" style="right:2137.5px;top:1135.0px;font-size:28px;color:#444;font-weight:400;text-align:right;">11</div><div class="t" style="left:634.5px;top:1135.0px;font-size:28px;color:#444;font-weight:400;">EGLL</div><div class="t" style="left:826px;top:1135.0px;font-size:28px;color:#444;font-weight:400;">2015-12-31 21:20:00 PST</div><div class="t" style="right:1400px;top:1135.0px;font-size:28px;color:#444;font-weight:400;text-align:right;">-0.4614</div><div class="t" style="right:1220px;top:1135.0px;font-size:28px;color:#444;font-weight:400;text-align:right;">51.4785</div><div class="t" style="right:1040px;top:1135.0px;font-size:28px;color:#444;font-weight:400;text-align:right;">35.6</div><div class="t" style="right:860px;top:1135.0px;font-size:28px;color:#444;font-weight:400;text-align:right;">33.8</div><div class="t" style="right:680px;top:1135.0px;font-size:28px;color:#444;font-weight:400;text-align:right;">93.08</div><div class="t" style="right:500px;top:1135.0px;font-size:28px;color:#444;font-weight:400;text-align:right;">150</div><div class="t" style="right:320px;top:1135.0px;font-size:28px;color:#444;font-weight:400;text-align:right;">2</div><div class="t" style="right:140px;top:1135.0px;font-size:28px;color:#444;font-weight:400;text-align:right;">0</div><div class="t" style="right:2137.5px;top:1193.0px;font-size:28px;color:#444;font-weight:400;text-align:right;">12</div><div class="t" style="left:634.5px;top:1193.0px;font-size:28px;color:#444;font-weight:400;">EGLL</div><div class="t" style="left:826px;top:1193.0px;font-size:28px;color:#444;font-weight:400;">2015-12-31 21:50:00 PST</div><div class="t" style="right:1400px;top:1193.0px;font-size:28px;color:#444;font-weight:400;text-align:right;">-0.4614</div><div class="t" style="right:1220px;top:1193.0px;font-size:28px;color:#444;font-weight:400;text-align:right;">51.4785</div><div class="t" style="right:1040px;top:1193.0px;font-size:28px;color:#444;font-weight:400;text-align:right;">33.8</div><div class="t" style="right:860px;top:1193.0px;font-size:28px;color:#444;font-weight:400;text-align:right;">32</div><div class="t" style="right:680px;top:1193.0px;font-size:28px;color:#444;font-weight:400;text-align:right;">93.03</div><div class="t" style="right:500px;top:1193.0px;font-size:28px;color:#444;font-weight:400;text-align:right;">80</div><div class="t" style="right:320px;top:1193.0px;font-size:28px;color:#444;font-weight:400;text-align:right;">3</div><div class="t" style="right:140px;top:1193.0px;font-size:28px;color:#444;font-weight:400;text-align:right;">0</div><div class="t" style="right:2137.5px;top:1251.0px;font-size:28px;color:#444;font-weight:400;text-align:right;">13</div><div class="t" style="left:634.5px;top:1251.0px;font-size:28px;color:#444;font-weight:400;">EGLL</div><div class="t" style="left:826px;top:1251.0px;font-size:28px;color:#444;font-weight:400;">2015-12-31 22:20:00 PST</div><div class="t" style="right:1400px;top:1251.0px;font-size:28px;color:#444;font-weight:400;text-align:right;">-0.4614</div><div class="t" style="right:1220px;top:1251.0px;font-size:28px;color:#444;font-weight:400;text-align:right;">51.4785</div><div class="t" style="right:1040px;top:1251.0px;font-size:28px;color:#444;font-weight:400;text-align:right;">35.6</div><div class="t" style="right:860px;top:1251.0px;font-size:28px;color:#444;font-weight:400;text-align:right;">33.8</div><div class="t" style="right:680px;top:1251.0px;font-size:28px;color:#444;font-weight:400;text-align:right;">93.08</div><div class="t" style="right:500px;top:1251.0px;font-size:28px;color:#444;font-weight:400;text-align:right;">70</div><div class="t" style="right:320px;top:1251.0px;font-size:28px;color:#444;font-weight:400;text-align:right;">2</div><div class="t" style="right:140px;top:1251.0px;font-size:28px;color:#444;font-weight:400;text-align:right;">0</div><div class="t" style="right:2137.5px;top:1309.0px;font-size:28px;color:#444;font-weight:400;text-align:right;">14</div><div class="t" style="left:634.5px;top:1309.0px;font-size:28px;color:#444;font-weight:400;">EGLL</div><div class="t" style="left:826px;top:1309.0px;font-size:28px;color:#444;font-weight:400;">2015-12-31 22:50:00 PST</div><div class="t" style="right:1400px;top:1309.0px;font-size:28px;color:#444;font-weight:400;text-align:right;">-0.4614</div><div class="t" style="right:1220px;top:1309.0px;font-size:28px;color:#444;font-weight:400;text-align:right;">51.4785</div><div class="t" style="right:1040px;top:1309.0px;font-size:28px;color:#444;font-weight:400;text-align:right;">33.8</div><div class="t" style="right:860px;top:1309.0px;font-size:28px;color:#444;font-weight:400;text-align:right;">32</div><div class="t" style="right:680px;top:1309.0px;font-size:28px;color:#444;font-weight:400;text-align:right;">93.03</div><div class="t" style="right:500px;top:1309.0px;font-size:28px;color:#444;font-weight:400;text-align:right;">50</div><div class="t" style="right:320px;top:1309.0px;font-size:28px;color:#444;font-weight:400;text-align:right;">2</div><div class="t" style="right:140px;top:1309.0px;font-size:28px;color:#444;font-weight:400;text-align:right;">0</div><div class="t" style="right:2137.5px;top:1367.0px;font-size:28px;color:#444;font-weight:400;text-align:right;">15</div><div class="t" style="left:634.5px;top:1367.0px;font-size:28px;color:#444;font-weight:400;">EGLL</div><div class="t" style="left:826px;top:1367.0px;font-size:28px;color:#444;font-weight:400;">2015-12-31 23:20:00 PST</div><div class="t" style="right:1400px;top:1367.0px;font-size:28px;color:#444;font-weight:400;text-align:right;">-0.4614</div><div class="t" style="right:1220px;top:1367.0px;font-size:28px;color:#444;font-weight:400;text-align:right;">51.4785</div><div class="t" style="right:1040px;top:1367.0px;font-size:28px;color:#444;font-weight:400;text-align:right;">33.8</div><div class="t" style="right:860px;top:1367.0px;font-size:28px;color:#444;font-weight:400;text-align:right;">33.8</div><div class="t" style="right:680px;top:1367.0px;font-size:28px;color:#444;font-weight:400;text-align:right;">100</div><div class="t" style="right:500px;top:1367.0px;font-size:28px;color:#444;font-weight:400;text-align:right;">70</div><div class="t" style="right:320px;top:1367.0px;font-size:28px;color:#444;font-weight:400;text-align:right;">2</div><div class="t" style="right:140px;top:1367.0px;font-size:28px;color:#444;font-weight:400;text-align:right;">0</div><div class="t" style="right:2137.5px;top:1425.0px;font-size:28px;color:#444;font-weight:400;text-align:right;">16</div><div class="t" style="left:634.5px;top:1425.0px;font-size:28px;color:#444;font-weight:400;">EGLL</div><div class="t" style="left:826px;top:1425.0px;font-size:28px;color:#444;font-weight:400;">2015-12-31 23:50:00 PST</div><div class="t" style="right:1400px;top:1425.0px;font-size:28px;color:#444;font-weight:400;text-align:right;">-0.4614</div><div class="t" style="right:1220px;top:1425.0px;font-size:28px;color:#444;font-weight:400;text-align:right;">51.4785</div><div class="t" style="right:1040px;top:1425.0px;font-size:28px;color:#444;font-weight:400;text-align:right;">33.8</div><div class="t" style="right:860px;top:1425.0px;font-size:28px;color:#444;font-weight:400;text-align:right;">33.8</div><div class="t" style="right:680px;top:1425.0px;font-size:28px;color:#444;font-weight:400;text-align:right;">100</div><div class="t" style="right:500px;top:1425.0px;font-size:28px;color:#444;font-weight:400;text-align:right;">70</div><div class="t" style="right:320px;top:1425.0px;font-size:28px;color:#444;font-weight:400;text-align:right;">2</div><div class="t" style="right:140px;top:1425.0px;font-size:28px;color:#444;font-weight:400;text-align:right;">0</div><div class="t" style="right:2137.5px;top:1483.0px;font-size:28px;color:#444;font-weight:400;text-align:right;">17</div><div class="t" style="left:634.5px;top:1483.0px;font-size:28px;color:#444;font-weight:400;">EGLL</div><div class="t" style="left:826px;top:1483.0px;font-size:28px;color:#444;font-weight:400;">2016-01-01 00:20:00 PST</div><div class="t" style="right:1400px;top:1483.0px;font-size:28px;color:#444;font-weight:400;text-align:right;">-0.4614</div><div class="t" style="right:1220px;top:1483.0px;font-size:28px;color:#444;font-weight:400;text-align:right;">51.4785</div><div class="t" style="right:1040px;top:1483.0px;font-size:28px;color:#444;font-weight:400;text-align:right;">35.6</div><div class="t" style="right:860px;top:1483.0px;font-size:28px;color:#444;font-weight:400;text-align:right;">33.8</div><div class="t" style="right:680px;top:1483.0px;font-size:28px;color:#444;font-weight:400;text-align:right;">93.08</div><div class="t" style="right:500px;top:1483.0px;font-size:28px;color:#444;font-weight:400;text-align:right;">80</div><div class="t" style="right:320px;top:1483.0px;font-size:28px;color:#444;font-weight:400;text-align:right;">4</div><div class="t" style="right:140px;top:1483.0px;font-size:28px;color:#444;font-weight:400;text-align:right;">0</div></div></div>
<div class="r" style="left:2670px;top:542px;width:30px;height:998px;background:#fafafa;border-left:2px solid #e8e8e8;border-right:2px solid #eeeeee;box-sizing:border-box"></div>
<div class="r" style="left:2678px;top:546px;width:16px;height:312px;background:#c4c4c4;border-radius:8px"></div>
<div class="r" style="left:540px;top:1510px;width:2130px;height:30px;background:#fafafa;border-top:2px solid #e8e8e8;box-sizing:border-box"></div>
<div class="r" style="left:546px;top:1518px;width:746px;height:16px;background:#c4c4c4;border-radius:8px"></div>
<div class="r" style="left:540px;top:1538px;width:2160px;height:4px;background:#ebebeb;"></div>
<div class="r" style="left:2096px;top:1658px;width:92px;height:68px;background:#4ca874;border-radius:8px"></div>
<div class="t" style="left:2121px;top:1678.3px;font-size:28px;color:#fff;font-weight:400;">OK</div>
<div class="r" style="left:2198px;top:1658px;width:172px;height:68px;background:#fff;border:2px solid #4ca874;border-radius:8px;box-sizing:border-box"></div>
<div class="t" style="left:2223px;top:1678.3px;font-size:28px;color:#4ca874;font-weight:400;">OK for All</div>
<div class="r" style="left:2380px;top:1658px;width:106px;height:68px;background:#fff;border:2px solid #c8c8c8;border-radius:8px;box-sizing:border-box"></div>
<div class="t" style="left:2405px;top:1678.3px;font-size:28px;color:#333;font-weight:400;">Skip</div>
<div class="r" style="left:2496px;top:1658px;width:188px;height:68px;background:#fff;border:2px solid #c8c8c8;border-radius:8px;box-sizing:border-box"></div>
<div class="t" style="left:2522px;top:1678.3px;font-size:28px;color:#333;font-weight:400;">Skip for All</div>
</div></div></body></html>
